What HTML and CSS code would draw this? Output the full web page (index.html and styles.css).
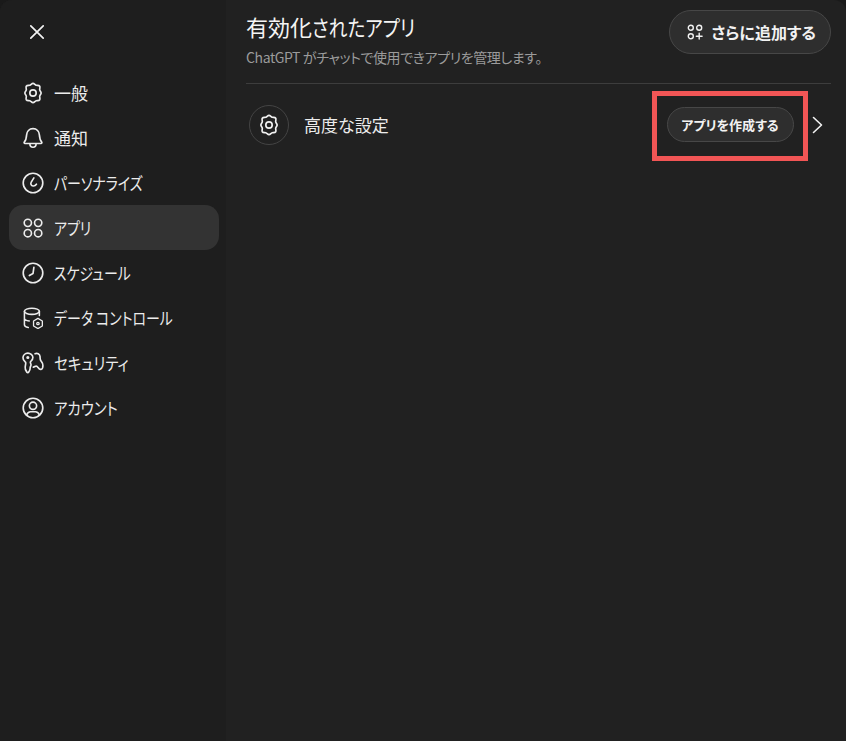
FILE: index.html
```html
<!DOCTYPE html>
<html lang="ja">
<head>
<meta charset="utf-8">
<title>有効化されたアプリ</title>
<link rel="stylesheet" href="styles.css">
</head>
<body>
<div class="dialog">
  <aside class="sidebar">
    <button class="close" aria-label="閉じる">
      <svg width="20" height="20" viewBox="0 0 20 20" fill="none" stroke="#f2f2f2" stroke-width="1.7" stroke-linecap="round"><path d="M3.8 3.8 16.2 16.2M16.2 3.8 3.8 16.2"/></svg>
    </button>
    <nav class="nav">
      <a class="item">
        <svg class="ic" viewBox="0 0 20 20" fill="none" stroke="currentColor" stroke-width="1.5" stroke-linejoin="round"><path d="M10 1.3c1.2 0 1.8 1.3 2.9 1.7 1.1.3 2.5-.2 3.2.9.6 1-.2 2.2 0 3.3.2 1 1.3 1.7 1.3 2.8s-1.1 1.8-1.3 2.8c-.2 1.1.6 2.3 0 3.3-.7 1.1-2.1.6-3.2.9-1.1.4-1.7 1.7-2.9 1.7s-1.8-1.3-2.9-1.7c-1.1-.3-2.5.2-3.2-.9-.6-1 .2-2.2 0-3.3-.2-1-1.3-1.7-1.3-2.8s1.1-1.8 1.3-2.8c.2-1.1-.6-2.3 0-3.3.7-1.1 2.1-.6 3.2-.9C8.2 2.6 8.8 1.3 10 1.3Z"/><circle cx="10" cy="10" r="2.9"/></svg>
        <span>一般</span>
      </a>
      <a class="item">
        <svg class="ic" viewBox="0 0 20 20" fill="none" stroke="currentColor" stroke-width="1.5" stroke-linejoin="round" stroke-linecap="round"><path d="M10 1.5c-3.5 0-5.6 2.6-5.8 5.7-.2 3-.7 5-2.1 6.5-.4.5-.1 1.3.6 1.3h14.600c.7 0 1-.8.6-1.3-1.4-1.5-1.9-3.5-2.1-6.5C15.600 4.100 13.500 1.500 10 1.500Z"/><path d="M7.200 15.200c0 1.900 1.200 3.200 2.800 3.200s2.800-1.300 2.800-3.200"/></svg>
        <span>通知</span>
      </a>
      <a class="item">
        <svg class="ic" viewBox="0 0 20 20" fill="none" stroke="currentColor" stroke-width="1.5" stroke-linecap="round"><circle cx="10" cy="10" r="8.9"/><path d="M10.800 5.300 8.400 9.200c-.9 1.500-.1 3.300 1.700 3.500 1.300.1 2.300-.5 3-1.600"/></svg>
        <span class="kana">パーソナライズ</span>
      </a>
      <a class="item active">
        <svg class="ic" viewBox="0 0 20 20" fill="none" stroke="currentColor" stroke-width="1.5"><circle cx="5.3" cy="5.3" r="3.3"/><circle cx="14.7" cy="5.3" r="3.3"/><circle cx="5.3" cy="14.7" r="3.3"/><circle cx="14.7" cy="14.7" r="3.3"/></svg>
        <span class="kana">アプリ</span>
      </a>
      <a class="item">
        <svg class="ic" viewBox="0 0 20 20" fill="none" stroke="currentColor" stroke-width="1.5" stroke-linecap="round" stroke-linejoin="round"><circle cx="10" cy="10" r="8.9"/><path d="M10.800 4.800 10 10.500 6.700 12.300"/></svg>
        <span class="kana">スケジュール</span>
      </a>
      <a class="item">
        <svg class="ic" viewBox="0 0 20 20" fill="none" stroke="currentColor" stroke-width="1.4" stroke-linecap="round" stroke-linejoin="round"><ellipse cx="9" cy="3.9" rx="6.8" ry="2.8"/><path d="M2.200 3.900v12.300c0 1.300 1.300 2.200 3.500 2.500M15.800 3.900v3.900M2.200 10.200c0 1.300 1.700 2.200 4.400 2.500"/><circle cx="14.500" cy="15" r="1.1" stroke-width="1.2"/><path stroke-width="1.2" d="M14.500 10.400 18.500 12.700v4.600L14.500 19.600 10.500 17.300v-4.600Z"/></svg>
        <span class="kana">データ コントロール</span>
      </a>
      <a class="item">
        <svg class="ic" viewBox="0 0 20 20" fill="none" stroke="currentColor" stroke-width="1.5" stroke-linecap="round" stroke-linejoin="round"><path d="M5.300 1C2.900 1 .9 2.900.9 5.300c0 1.500.8 2.800 1.900 3.600.5.300.7.900.6 1.400l-.5 3.500c-.2 1.500.3 3 1.500 4.500.5.600 1.300.5 1.700-.1.800-1.100 1.300-2.400 1.300-3.500 0-1.200.8-1.900.8-3 0-1-.6-1.500-.6-2.300 0-.6.300-1 .8-1.400 1-.8 1.500-1.900 1.500-3.200C9.700 2.900 7.700 1 5.300 1Z"/><circle cx="5.3" cy="5" r=".7"/><path d="M11.900 1.600c1.900-1 4.300.3 4.500 2.500.1 1.500-.1 2.700.7 3.800.9 1.200 1.900 2.300 1.900 4.300 0 1.700-.5 3.100-1.400 3.400-1.200.4-2.200-.4-2.800-1.300-.6-.8-1.100-1.500-1.900-1.500-.9 0-1.700 1-2.600.9"/></svg>
        <span class="kana wide">セキュリティ</span>
      </a>
      <a class="item">
        <svg class="ic" viewBox="0 0 20 20" fill="none" stroke="currentColor" stroke-width="1.5" stroke-linecap="round"><circle cx="10" cy="10" r="8.9"/><circle cx="10" cy="8" r="3.3"/><path d="M4.200 16.200c.8-2 2.100-2.800 3.500-2.800h4.600c1.400 0 2.700.8 3.500 2.800"/></svg>
        <span class="kana wide">アカウント</span>
      </a>
    </nav>
  </aside>
  <main class="content">
    <header class="head">
      <div class="titles">
        <h1 class="title">有効化<span class="title-kana">されたアプリ</span></h1>
        <p class="sub">ChatGPT がチャットで使用できアプリを管理します。</p>
      </div>
      <button class="more">
        <svg class="more-ic" viewBox="0 0 16 16" fill="none" stroke="currentColor" stroke-width="1.4" stroke-linecap="round"><circle cx="3.8" cy="3.8" r="2.5"/><circle cx="12.2" cy="3.8" r="2.5"/><circle cx="3.8" cy="12.2" r="2.5"/><path d="M12.200 9.300v5.800M9.300 12.200h5.800"/></svg>
        <span>さらに追加する</span>
      </button>
    </header>
    <section class="row">
      <div class="badge">
        <svg class="badge-ic" viewBox="0 0 20 20" fill="none" stroke="currentColor" stroke-width="1.5" stroke-linejoin="round"><path d="M10 1.3c1.2 0 1.8 1.3 2.9 1.7 1.1.3 2.5-.2 3.2.9.6 1-.2 2.2 0 3.3.2 1 1.3 1.7 1.3 2.8s-1.1 1.8-1.3 2.8c-.2 1.1.6 2.3 0 3.3-.7 1.1-2.1.6-3.2.9-1.1.4-1.7 1.7-2.9 1.7s-1.8-1.3-2.9-1.7c-1.1-.3-2.5.2-3.2-.9-.6-1 .2-2.2 0-3.3-.2-1-1.3-1.7-1.3-2.8s1.1-1.8 1.3-2.8c.2-1.1-.6-2.3 0-3.3.7-1.1 2.1-.6 3.2-.9C8.2 2.6 8.8 1.3 10 1.3Z"/><circle cx="10" cy="10" r="2.9"/></svg>
      </div>
      <span class="row-label">高度な設定</span>
      <div class="highlight"><button class="create">アプリを作成する</button></div>
      <svg class="chev" viewBox="0 0 12 18" fill="none" stroke="currentColor" stroke-width="1.6" stroke-linecap="round" stroke-linejoin="round"><path d="M1.5 1.5 9.5 9l-8 7.5"/></svg>
    </section>
  </main>
</div>
</body>
</html>
```
FILE: styles.css
```css
* { box-sizing: border-box; }
html, body { margin: 0; height: 100%; }
body {
  background: #1a1a1a;
  color: #f2f2f2;
  font-family: "Noto Sans CJK JP", "Noto Sans", sans-serif;
  font-feature-settings: "palt";
  overflow: hidden;
}
.dialog {
  display: flex;
  width: 846px;
  height: 741px;
  background: #212121;
  border-radius: 12px 12px 0 0;
  overflow: hidden;
}
.sidebar {
  width: 226px;
  flex: none;
  background: #1e1e1e;
  padding: 12px 7px 0 9px;
}
.close {
  display: flex;
  align-items: center;
  justify-content: center;
  width: 40px;
  height: 40px;
  margin-left: 8px;
  padding: 0;
  background: none;
  border: 0;
}
.nav {
  display: flex;
  flex-direction: column;
  margin-top: 18px;
}
.item {
  display: flex;
  align-items: center;
  gap: 10px;
  height: 45px;
  padding: 0 0 1px 13px;
  border-radius: 14px;
  font-size: 17px;
  color: #ececec;
}
.item.active { background: #333333; }
.kana {
  display: inline-block;
  transform: scaleX(0.82);
  transform-origin: left center;
}
.kana.wide { transform: scaleX(0.85); }
.ic { width: 22px; height: 22px; flex: none; margin-top: 1px; }
.content {
  flex: 1;
  min-width: 0;
  padding: 9px 15px 0 20px;
}
.head {
  display: flex;
  justify-content: space-between;
  align-items: flex-start;
  height: 75px;
  border-bottom: 1px solid #3d3d3d;
}
.title {
  margin: 0;
  font-size: 22px;
  font-weight: 400;
  line-height: 34px;
  color: #f4f4f4;
}
.title-kana {
  display: inline-block;
  transform: scaleX(0.85);
  transform-origin: left center;
}
.sub {
  margin: 4px 0 0;
  font-size: 14px;
  line-height: 20px;
  letter-spacing: -0.4px;
  color: #9b9b9b;
}
.more {
  display: flex;
  align-items: center;
  gap: 8px;
  height: 44px;
  margin-top: 1px;
  padding: 0 14px 0 17px;
  background: #2e2e2e;
  border: 1px solid #474747;
  border-radius: 22px;
  color: #f2f2f2;
  font: 700 16px "Noto Sans CJK JP", sans-serif;
  font-feature-settings: "palt";
}
.more-ic { width: 16px; height: 16px; flex: none; }
.row {
  display: flex;
  align-items: center;
  height: 84px;
  padding-left: 3px;
}
.badge {
  display: flex;
  align-items: center;
  justify-content: center;
  width: 40px;
  height: 40px;
  margin-bottom: 2px;
  border: 1px solid #444444;
  border-radius: 50%;
}
.badge-ic { width: 22px; height: 22px; }
.row-label {
  margin: 0 0 4px 15px;
  font-size: 17px;
  color: #ececec;
}
.highlight {
  display: flex;
  align-items: center;
  justify-content: center;
  width: 156px;
  height: 70px;
  margin-left: auto;
  padding-bottom: 3px;
  border: 5px solid #f25555;
}
.create {
  height: 35px;
  width: 127px;
  padding: 0;
  background: #2e2e2e;
  border: 1px solid #474747;
  border-radius: 18px;
  color: #f2f2f2;
  font: 700 13px "Noto Sans CJK JP", sans-serif;
  font-feature-settings: "palt";
}
.chev { width: 12px; height: 18px; margin: 0 7px 2px 4px; color: #f2f2f2; }
```
